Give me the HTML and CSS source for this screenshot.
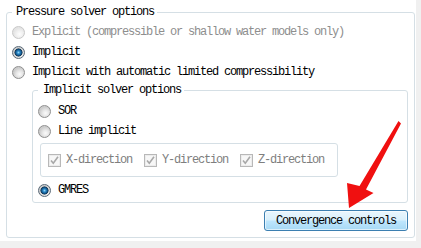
FILE: index.html
```html
<!DOCTYPE html>
<html lang="en">
  <head>
    <meta charset="UTF-8" />
    <meta name="viewport" content="width=device-width, initial-scale=1.0" />
    <title>Pressure solver options</title>
    <link rel="stylesheet" href="styles.css">
  </head>
  <body>
    <div class="panel">
      <fieldset class="group outer">
        <legend>Pressure solver options</legend>
        <label class="option disabled"><input type="radio" name="pressure" disabled>Explicit (compressible or shallow water models only)</label>
        <label class="option"><input type="radio" name="pressure" checked>Implicit</label>
        <label class="option"><input type="radio" name="pressure">Implicit with automatic limited compressibility</label>

        <fieldset class="group inner">
          <legend>Implicit solver options</legend>
          <label class="option"><input type="radio" name="solver">SOR</label>
          <label class="option"><input type="radio" name="solver">Line implicit</label>

          <div class="directions">
            <label class="check"><span class="box"><svg width="11" height="11" viewBox="0 0 11 11"><path d="M2 5.5 L4.3 8.3 L9 1.8" /></svg></span>X-direction</label>
            <label class="check"><span class="box"><svg width="11" height="11" viewBox="0 0 11 11"><path d="M2 5.5 L4.3 8.3 L9 1.8" /></svg></span>Y-direction</label>
            <label class="check"><span class="box"><svg width="11" height="11" viewBox="0 0 11 11"><path d="M2 5.5 L4.3 8.3 L9 1.8" /></svg></span>Z-direction</label>
          </div>

          <label class="option gmres"><input type="radio" name="solver" checked>GMRES</label>
        </fieldset>

        <div class="actions">
          <button class="btn">Convergence controls</button>
        </div>
      </fieldset>
    </div>

    <!-- red annotation arrow pointing at the button -->
    <svg class="arrow" width="421" height="248" viewBox="0 0 421 248">
      <polygon points="398.5,121 401,123.5 366,189.5 373.5,193 349,208 347,183 359.5,186" />
    </svg>
  </body>
</html>
```

FILE: styles.css
```css
* {
  box-sizing: border-box;
}

body {
  margin: 0;
  width: 421px;
  height: 248px;
  overflow: hidden;
  position: relative;
  background-color: #f0f0f0;
  font-family: "Liberation Mono", "Courier New", monospace;
  font-size: 12px;
  letter-spacing: -1.2px;
  color: #000;
}

.panel {
  width: 416px;
  height: 241px;
  background-color: #fff;
  padding: 5px 0 0 6px;
}

.group {
  margin: 0;
  min-width: 0;
  border: 1px solid #d5dfe5;
  border-radius: 3px;
}

.group legend {
  line-height: 14px;
}

.outer {
  width: 409px;
  padding: 3px 6px 6px 5px;
}

.outer > legend {
  padding: 0 3px 0 4px;
}

.inner {
  margin: 1px 0 0 20px;
  padding: 4px 0 2px 5px;
}

.inner > legend {
  padding: 0 3px 0 5px;
}

.option {
  display: flex;
  align-items: center;
  height: 20px;
}

.option.disabled {
  color: #8e8e8e;
}

.option input {
  appearance: none;
  -webkit-appearance: none;
  margin: 0 7px 0 0;
  width: 13px;
  height: 13px;
  border-radius: 50%;
  border: 1px solid #8f8f8f;
  background: radial-gradient(circle at 60% 65%, #fbfbfb 0, #e8e8e8 3px, #cdcdcd 6px);
}

.option input:checked {
  border-color: #5a6a78;
  background:
    radial-gradient(circle at 50% 50%, #8fd3f5 0, #2b8ac8 1.5px, #0f4f82 3px, #17364f 3.8px, transparent 4.3px),
    radial-gradient(circle at 60% 65%, #fbfbfb 0, #e8e8e8 3px, #cdcdcd 6px);
}

.option input:disabled {
  border-color: #c8c8c8;
  background: radial-gradient(circle at 60% 65%, #fdfdfd 0, #f2f2f2 3px, #e4e4e4 6px);
}

.directions {
  display: flex;
  align-items: center;
  gap: 12px;
  width: 298px;
  height: 34px;
  margin: 2px 0 0 2px;
  padding-left: 7px;
  border: 1px solid #d5dfe5;
  border-radius: 3px;
}

.check {
  display: flex;
  align-items: center;
  color: #7e7e7e;
}

.check .box {
  width: 13px;
  height: 13px;
  margin-right: 5px;
  border: 1px solid #b8b8b8;
  background-color: #f7f7f7;
  box-shadow: inset 0 0 0 1px #ececec;
}

.check svg {
  display: block;
  margin: 0;
}

.check path {
  fill: none;
  stroke: #a8a8a8;
  stroke-width: 1.6;
}

.gmres {
  margin-top: 3px;
}

.actions {
  display: flex;
  justify-content: flex-end;
  margin-top: 7px;
}

.btn {
  width: 144px;
  height: 21px;
  padding: 0;
  font: inherit;
  letter-spacing: inherit;
  color: #000;
  border: 1px solid #3c7fb1;
  border-radius: 3px;
  background: linear-gradient(#eaf6fd 0%, #d9f0fc 48%, #bee6fd 52%, #a7d9f5 100%);
  box-shadow: inset 0 0 0 1px rgba(255, 255, 255, 0.6);
}

.arrow {
  position: absolute;
  top: 0;
  left: 0;
  pointer-events: none;
}

.arrow polygon {
  fill: #f01010;
}
```
